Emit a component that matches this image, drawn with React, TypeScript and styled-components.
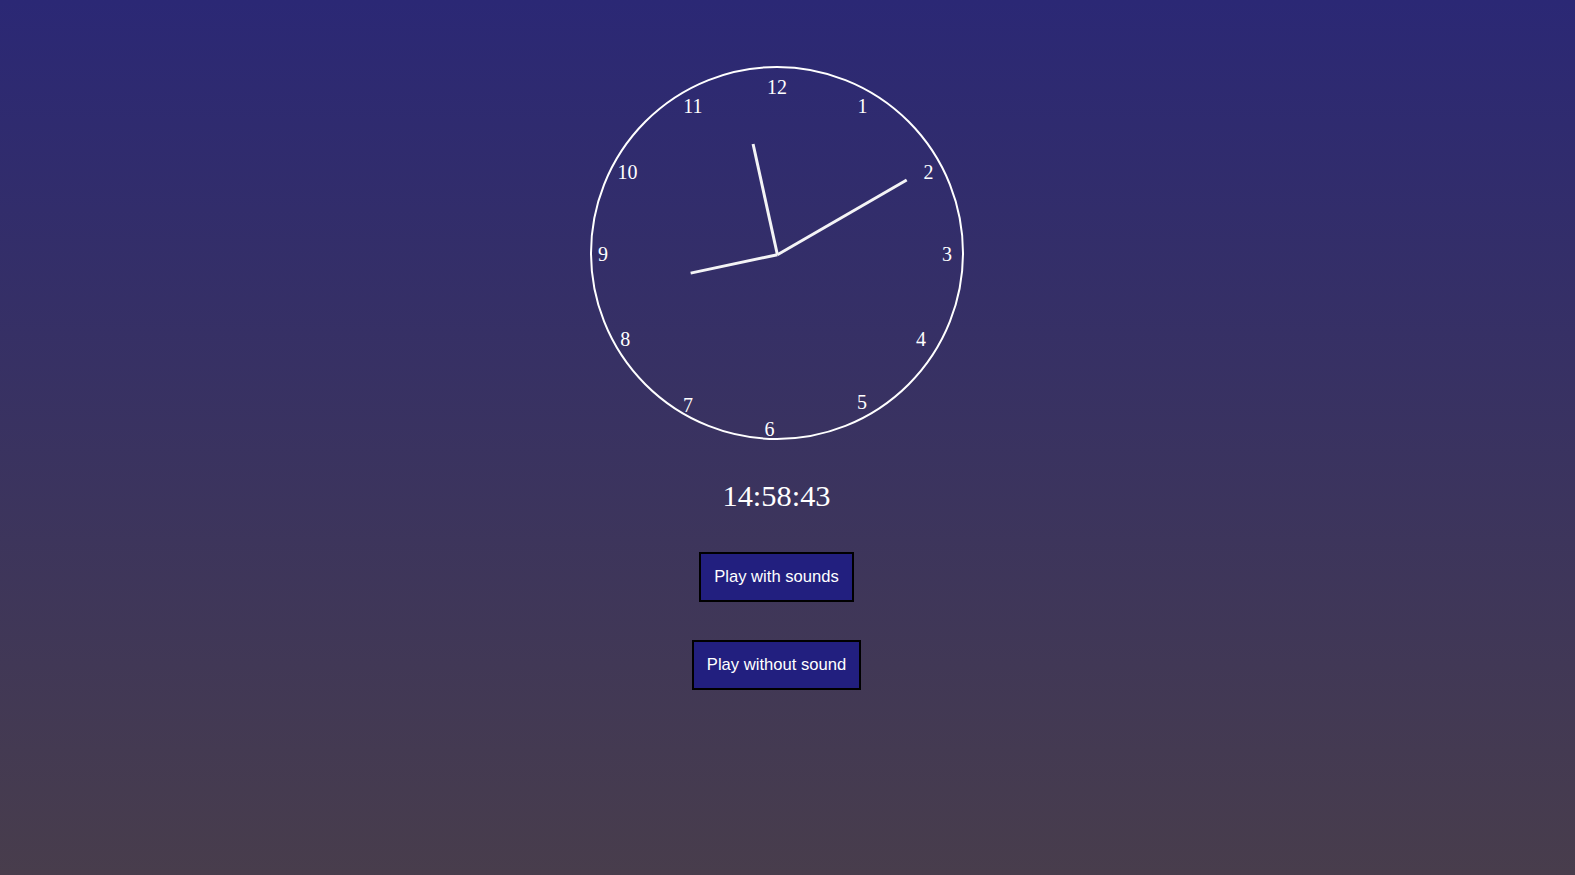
import React from "react";
import styled, { createGlobalStyle } from "styled-components";

const GlobalStyle = createGlobalStyle`
  html, body {
    margin: 0;
    padding: 0;
    height: 100%;
  }
  body {
    background: linear-gradient(to bottom, #2b2875 0%, #483d4c 100%);
    background-attachment: fixed;
    min-height: 100vh;
    font-family: "Liberation Serif", "Times New Roman", serif;
  }
`;

const Page = styled.main`
  min-height: 100vh;
  box-sizing: border-box;
  display: flex;
  flex-direction: column;
  align-items: center;
  padding: 66px 22px 0 0;
`;

const Face = styled.div`
  position: relative;
  width: 374px;
  height: 374px;
  box-sizing: border-box;
  border: 2px solid #ffffff;
  border-radius: 50%;
`;

const Numeral = styled.span`
  position: absolute;
  transform: translate(-50%, -50%);
  font-family: "Liberation Serif", "Times New Roman", serif;
  font-size: 20px;
  line-height: 1;
  color: #ffffff;
  white-space: nowrap;
`;

const Hands = styled.svg`
  position: absolute;
  inset: 0;
  width: 100%;
  height: 100%;
  overflow: visible;
`;

const DigitalTime = styled.div`
  margin-top: 39px;
  font-family: "Liberation Serif", "Times New Roman", serif;
  font-size: 30.4px;
  color: #ffffff;
`;

const Buttons = styled.div`
  display: flex;
  flex-direction: column;
  align-items: center;
  gap: 38px;
  margin-top: 38px;
`;

const PlayButton = styled.button`
  font-family: "Liberation Sans", Arial, sans-serif;
  font-size: 16.6px;
  line-height: 18px;
  color: #ffffff;
  background: #221f7f;
  border: 2px solid #000000;
  padding: 14px 13px;
  cursor: pointer;
`;

// numeral centers relative to the face's inner box
const numerals: { n: number; x: number; y: number }[] = [
  { n: 12, x: 185.4, y: 19 },
  { n: 1, x: 271, y: 38.4 },
  { n: 2, x: 337, y: 104 },
  { n: 3, x: 355.4, y: 186 },
  { n: 4, x: 329.4, y: 271 },
  { n: 5, x: 270.4, y: 334.4 },
  { n: 6, x: 178, y: 360.7 },
  { n: 7, x: 96.4, y: 336.7 },
  { n: 8, x: 33.7, y: 271 },
  { n: 9, x: 11.4, y: 186 },
  { n: 10, x: 36, y: 104 },
  { n: 11, x: 101.4, y: 38.4 },
];

const pivot = { x: 185.4, y: 186.7 };

const hands = [
  { angle: 60, length: 149.3 },
  { angle: 347.6, length: 113.3 },
  { angle: 258, length: 88.7 },
];

function end(angle: number, length: number) {
  const r = (angle * Math.PI) / 180;
  return { x: pivot.x + Math.sin(r) * length, y: pivot.y - Math.cos(r) * length };
}

export default function App() {
  return (
    <>
      <GlobalStyle />
      <Page>
        <Face>
          {numerals.map((d) => (
            <Numeral key={d.n} style={{ left: d.x, top: d.y }}>
              {d.n}
            </Numeral>
          ))}
          <Hands viewBox="0 0 370 370">
            {hands.map((h, i) => {
              const e = end(h.angle, h.length);
              return (
                <line
                  key={i}
                  x1={pivot.x}
                  y1={pivot.y}
                  x2={e.x}
                  y2={e.y}
                  stroke="#f4f4f6"
                  strokeWidth={3}
                />
              );
            })}
          </Hands>
        </Face>
        <DigitalTime>14:58:43</DigitalTime>
        <Buttons>
          <PlayButton>Play with sounds</PlayButton>
          <PlayButton>Play without sound</PlayButton>
        </Buttons>
      </Page>
    </>
  );
}
